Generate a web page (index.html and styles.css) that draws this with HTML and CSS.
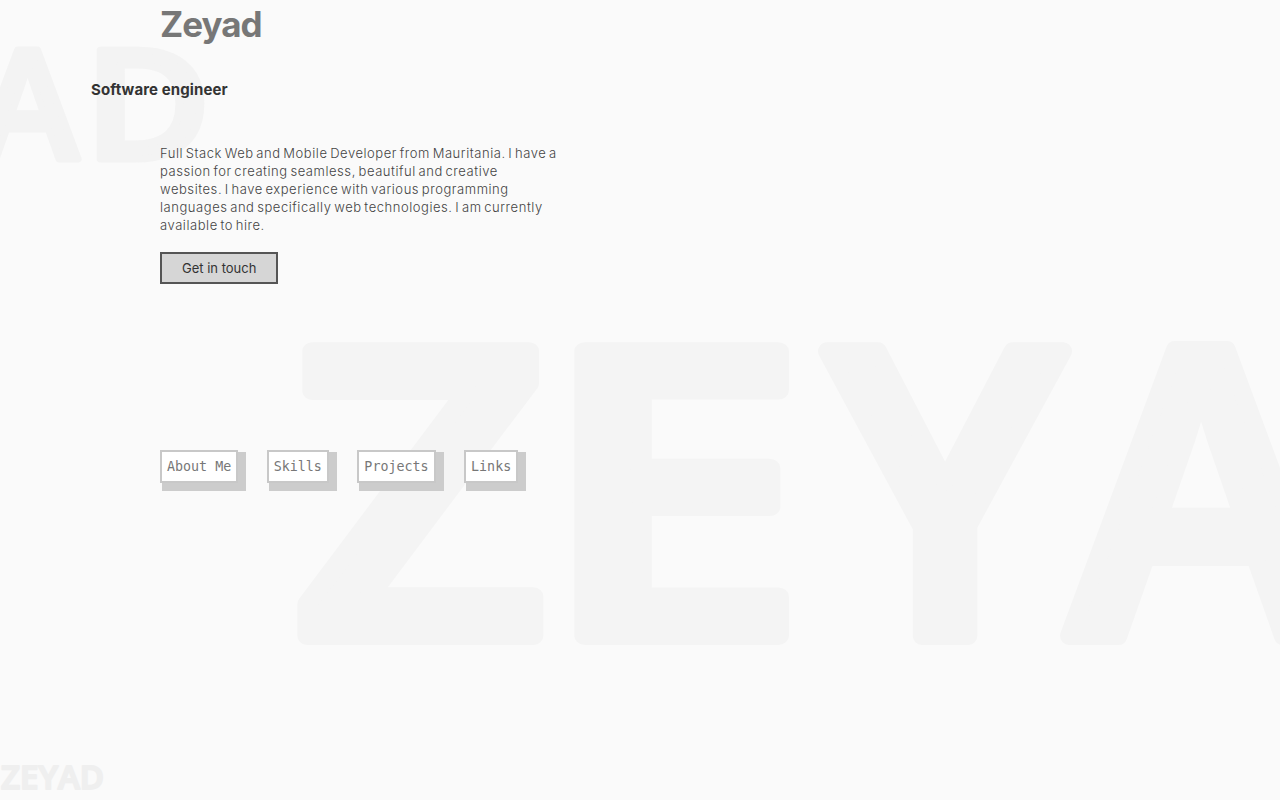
FILE: index.html
```html
<!DOCTYPE html>
<html lang="en">
<head>
<meta charset="utf-8">
<title>Zeyad</title>
<link rel="stylesheet" href="styles.css">
</head>
<body>
<svg class="backdrop" width="1280" height="800" viewBox="0 0 1280 800" aria-hidden="true">
  <text class="mark mark-top" x="-23" y="159">A</text>
  <text class="mark mark-top" transform="translate(84.6 159) scale(1.125 1)">D</text>
  <text class="mark mark-big" transform="translate(293.6 636) scale(1.104 1)">Z</text>
  <text class="mark mark-big" transform="translate(540.3 636) scale(1.197 1)">E</text>
  <text class="mark mark-big" x="827" y="636">Y</text>
  <text class="mark mark-big" x="1069" y="636">A</text>
  <text class="mark mark-foot" x="1" y="789">ZEYAD</text>
</svg>
<main class="page">
  <header class="intro">
    <h1 class="name">Zeyad</h1>
    <h2 class="role">Software engineer</h2>
    <p class="bio">Full Stack Web and Mobile Developer from Mauritania. I have a passion for creating seamless, beautiful and creative websites. I have experience with various programming languages and specifically web technologies. I am currently available to hire.</p>
    <a class="cta" href="#contact">Get in touch</a>
  </header>
  <nav class="menu">
    <a class="menu-item" href="#about">About Me</a>
    <a class="menu-item" href="#skills">Skills</a>
    <a class="menu-item" href="#projects">Projects</a>
    <a class="menu-item" href="#links">Links</a>
  </nav>
</main>
</body>
</html>
```

FILE: styles.css
```css
* { box-sizing: border-box; }
html, body { margin: 0; padding: 0; }
body {
  background: #fafafa;
  font-family: "Inter", "Open Sans", sans-serif;
  color: #333;
  width: 1280px;
  height: 800px;
  overflow: hidden;
  position: relative;
}
.backdrop {
  position: absolute;
  left: 0;
  top: 0;
  z-index: 0;
}
.mark {
  font-family: "Open Sans", sans-serif;
  font-weight: 600;
  fill: #f3f3f3;
  stroke: #f3f3f3;
  stroke-linejoin: round;
  stroke-linecap: round;
}
.mark-top {
  font-size: 153px;
  stroke-width: 7px;
}
.mark-big {
  font-size: 399px;
  stroke-width: 18px;
  fill: #f4f4f4;
  stroke: #f4f4f4;
}
.mark-foot {
  font-size: 33px;
  stroke-width: 2px;
  fill: #efefef;
  stroke: #efefef;
}
.page {
  position: relative;
  z-index: 1;
  padding-left: 160px;
}
.intro {
  width: 400px;
}
.name {
  margin: 0;
  padding-top: 2px;
  font-size: 35px;
  line-height: 44px;
  font-weight: 700;
  letter-spacing: -1px;
  color: #777;
}
.role {
  margin: 34px 0 0 -69px;
  font-size: 15px;
  line-height: 20px;
  font-weight: 700;
  color: #333;
  letter-spacing: 0.1px;
}
.bio {
  margin: 44px 0 0;
  font-size: 13px;
  line-height: 18px;
  font-weight: 300;
  letter-spacing: 0.55px;
  word-spacing: -1.5px;
  color: #444;
}
.cta {
  display: inline-block;
  margin-top: 18px;
  padding: 6px 20px;
  border: 2px solid #555;
  background: #d6d6d6;
  color: #333;
  font-size: 13px;
  line-height: 16px;
  font-weight: 400;
  text-decoration: none;
}
.menu {
  display: flex;
  gap: 28.5px;
  margin-top: 166px;
}
.menu-item {
  display: block;
  padding: 5px;
  border: 2px solid #c8c8c8;
  background: #fff;
  box-shadow: 5px 5px 0 3px #ccc;
  font-family: "DejaVu Sans Mono", "Liberation Mono", monospace;
  font-size: 13.33px;
  line-height: 19px;
  color: #777;
  text-decoration: none;
}
```
